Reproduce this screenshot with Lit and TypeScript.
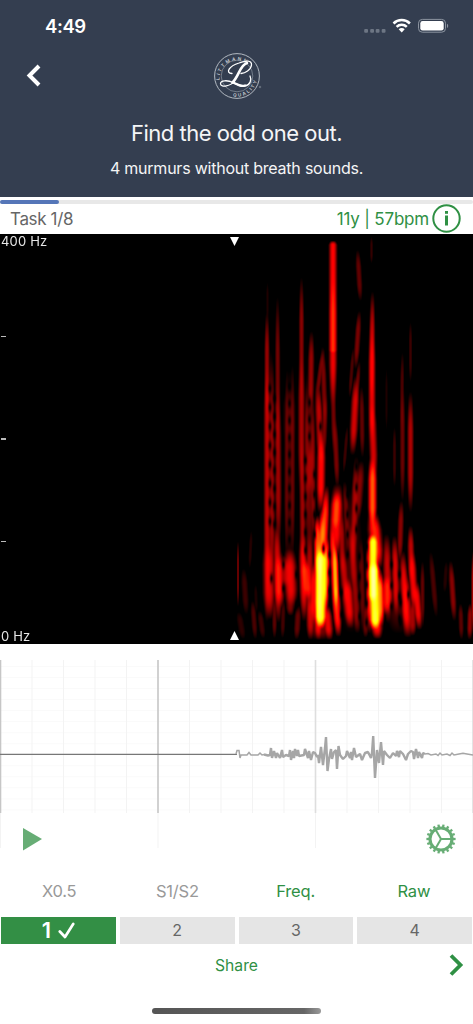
import { LitElement, html, css, svg } from "lit";
import { customElement, property } from "lit/decorators.js";
import { classMap } from "lit/directives/class-map.js";
import { styleMap } from "lit/directives/style-map.js";

// [x at top, x at bottom, top, bottom, half width, level, end sharpness]
type Streak = [number, number, number, number, number, number, number?];

const STREAKS: Streak[] = [
  // loud vertical bar
  [332.5, 332.5, 6, 120, 3, 0.36, 25],
  [332.5, 332.5, 30, 178, 3, 0.34],
  [332, 334, 130, 225, 2, 0.17],
  [334, 337, 180, 255, 2.2, 0.18],
  // early ladder
  [267, 267, 45, 90, 1.2, 0.06],
  [266.5, 266.5, 75, 200, 2, 0.22],
  [266.5, 266.5, 120, 390, 2.4, 0.25, 5],
  [271.5, 272, 120, 370, 2.2, 0.2],
  [269, 269, 110, 385, 4, 0.2],
  [277, 277.5, 58, 240, 2, 0.17],
  [277, 278, 140, 320, 2.6, 0.23],
  [276, 278, 285, 390, 3, 0.29],
  [286.5, 286, 130, 330, 1.8, 0.14],
  [292, 292, 125, 330, 2, 0.15],
  [289, 289, 130, 340, 4, 0.13],
  [289, 289, 150, 215, 4.5, 0.13],
  [301, 301, 40, 180, 2, 0.2],
  [301, 301, 110, 270, 2.6, 0.24],
  [301.5, 303, 190, 390, 2.4, 0.23],
  [306, 307, 145, 300, 2, 0.17],
  [311, 310, 95, 185, 2.4, 0.22],
  [312, 313, 160, 320, 2, 0.19],
  [309, 309, 130, 340, 4.5, 0.17],
  [310, 309, 205, 265, 3.5, 0.22],
  [323, 316, 113, 165, 2, 0.17],
  [322, 325, 110, 200, 2.2, 0.18],
  [317, 321, 145, 240, 2.8, 0.27],
  [325, 323, 155, 225, 2.2, 0.18],
  [321, 320, 195, 280, 3.2, 0.37],
  // right of the bar
  [371, 371, 1, 30, 1.2, 0.09],
  [357, 360, 14, 68, 2.2, 0.15],
  [359, 355, 75, 136, 2.2, 0.18],
  [353, 349, 112, 165, 1.6, 0.12],
  [359, 354, 125, 185, 1.8, 0.16],
  [356, 352, 140, 222, 3, 0.3],
  [361, 362, 150, 225, 2, 0.15],
  [347, 343, 190, 240, 1.5, 0.1],
  [372, 371, 55, 180, 2.2, 0.27],
  [371.5, 371.5, 82, 220, 2.7, 0.32],
  [371, 374, 160, 250, 3, 0.3],
  [372, 372, 218, 300, 3.2, 0.5],
  [386, 386, 130, 200, 1.2, 0.06],
  [394, 394, 190, 255, 1.5, 0.1],
  [402, 401, 115, 205, 1.6, 0.12],
  [402, 402, 145, 270, 2, 0.16],
  [410, 410, 85, 150, 1.4, 0.1],
  [410, 410, 155, 280, 2.4, 0.25],
  // main beat
  [326, 322, 250, 340, 3, 0.44],
  [323, 318, 270, 360, 3.2, 0.52],
  [317, 317, 280, 345, 2.7, 0.48],
  [326, 324, 300, 380, 3, 0.6],
  [318, 318, 300, 400, 3.4, 0.64],
  [321, 320, 312, 396, 4.6, 0.82, 6],
  [313, 313, 325, 395, 2.8, 0.36],
  [337, 335, 248, 325, 4.6, 0.36],
  [337, 334, 255, 300, 4, 0.4],
  [331, 336, 280, 395, 2.6, 0.42],
  [334, 336, 305, 378, 2.4, 0.58],
  [335, 338, 345, 403, 3, 0.4],
  [341, 342, 275, 350, 2.4, 0.23],
  // valley between the beats
  [356, 352, 220, 345, 2.8, 0.25],
  [361, 356, 225, 290, 3.2, 0.2],
  [350, 355, 285, 365, 3, 0.25],
  [346, 350, 340, 395, 4, 0.35],
  [342, 346, 310, 380, 3, 0.27],
  [344, 348, 245, 320, 2.3, 0.17],
  [354, 357, 340, 400, 3, 0.21],
  [360, 363, 300, 402, 2.4, 0.15],
  [350, 350, 250, 404, 8, 0.12],
  // second beat
  [372, 378, 275, 335, 4.8, 0.42],
  [372.5, 372.5, 298, 370, 4, 0.78, 7],
  [373, 375, 325, 397, 4.6, 0.82, 6],
  [379, 380, 335, 394, 3.2, 0.56],
  [368, 369, 305, 400, 2.4, 0.38],
  [375, 377, 370, 405, 4.2, 0.38],
  [366, 365, 365, 404, 2.4, 0.18],
  // trailing activity
  [386, 388, 298, 390, 3.2, 0.28],
  [387, 386, 338, 382, 4.6, 0.38],
  [394, 396, 300, 385, 2.8, 0.31],
  [401, 399, 265, 330, 2.3, 0.2],
  [402, 406, 315, 404, 3, 0.33],
  [410, 411, 290, 355, 2.5, 0.27],
  [411, 414, 312, 380, 3, 0.34],
  [415, 419, 345, 396, 3, 0.34],
  [405, 408, 338, 404, 3.4, 0.32],
  [412, 412, 365, 402, 3, 0.24],
  [398, 398, 320, 402, 9, 0.12],
  [422, 422, 325, 395, 1.8, 0.15],
  [430, 436, 315, 385, 2.3, 0.12],
  [446, 444, 325, 360, 1.8, 0.07],
  [450, 454, 325, 388, 2.4, 0.2],
  [460, 461, 368, 406, 2, 0.14],
  [470, 469, 368, 406, 2.2, 0.21],
  [473, 473, 315, 402, 1.8, 0.27],
  // low frequencies before the beats
  [237.5, 237.5, 305, 374, 0.9, 0.18],
  [243, 246, 332, 382, 2.6, 0.1],
  [251, 249, 294, 336, 1.5, 0.07],
  [255, 256, 348, 380, 1.6, 0.06],
  [238, 243, 376, 406, 2.8, 0.08],
  [252, 255, 365, 406, 2.2, 0.12],
  [259, 263, 375, 405, 2.4, 0.1],
  [268, 269, 302, 386, 4.4, 0.32],
  [278, 279, 315, 376, 4, 0.37],
  [289, 291, 312, 376, 4.8, 0.34],
  [284, 286, 320, 356, 4.2, 0.26],
  [302, 304, 294, 388, 3.2, 0.32],
  [304, 308, 322, 368, 4.6, 0.4],
  [309, 309, 290, 404, 3, 0.25],
  [274, 274, 360, 405, 1.9, 0.14],
  [289, 290, 355, 382, 3, 0.18],
  [283, 282, 364, 405, 1.9, 0.11],
  [298, 296, 370, 406, 2.5, 0.15],
  [310, 310, 360, 406, 3, 0.27],
  [317, 318, 370, 406, 3, 0.32],
  [326, 329, 370, 406, 3.4, 0.33],
  [320, 320, 375, 406, 9, 0.18],
];

// dark pockets inside the streaks: [x, first y, last y, step]
const POCKETS: [number, number, number, number][] = [
  [269.5, 154, 300, 19],
  [274, 164, 305, 18],
  [289, 152, 310, 17],
  [283, 330, 375, 24],
  [296, 340, 372, 30],
  [309, 168, 215, 17],
  [305, 226, 320, 18],
  [314, 240, 300, 20],
  [320, 192, 192, 20],
  [271, 344, 344, 20],
  [323, 314, 314, 20],
  [329, 320, 365, 18],
  [347, 260, 335, 20],
  [356, 232, 305, 21],
  [391, 330, 392, 21],
  [399, 340, 385, 22],
  [408, 360, 360, 20],
  [366, 312, 390, 19],
  [359, 322, 390, 20],
  [341, 358, 385, 22],
  [400, 368, 390, 20],
];

const WAVE: [number, number][] = [
  [264, 754.5], [268, 755.5], [270, 755], [271, 748], [272, 758], [274, 751],
  [276, 758], [277, 753], [280, 758], [282, 750], [283, 757], [286, 755], [289, 756], [290, 750],
  [291, 760], [293, 751], [294, 758], [295, 749], [297, 756], [298, 750], [299, 756], [304, 755],
  [305, 749], [308, 758], [309, 751], [311, 760], [313, 752], [315, 753], [317, 757], [318, 755],
  [319, 763], [321, 747], [323, 765], [325, 748], [326, 737], [327.5, 771], [329, 759], [331, 749],
  [332, 759], [334, 752], [336, 750], [337, 769], [338.5, 746], [340, 755], [343, 759], [346, 756],
  [347, 751], [350, 758], [351, 752], [352, 760], [354, 748], [356, 757], [360, 754], [362, 760],
  [365, 753], [368, 752], [371, 758], [372, 753], [373.2, 736], [375, 778], [377, 750], [379, 763],
  [381, 742], [383, 765], [384, 751], [387, 755], [390, 758], [393, 753], [396, 756], [397, 751],
  [399, 757], [400, 751], [403, 754], [406, 760], [408, 754], [411, 751], [413, 752], [414, 759],
  [416, 749], [418, 758], [419, 752], [422, 758], [423, 753], [425, 754],
];

const LEAD: [number, number][] = [
  [236, 754], [237, 750.5], [239, 750.5], [240, 758], [241, 755], [247, 755], [249, 752.5], [251, 755],
  [258, 755], [260, 753], [262, 755], [264, 754.5],
];

const TAIL: [number, number][] = [
  [425, 754], [428, 753.5], [431, 755], [436, 754], [438, 755.5], [440, 753], [442, 755], [447, 754],
  [450, 755.5], [452, 753], [454, 755], [459, 754], [463, 753.3], [467, 754], [473, 755],
];

const toPoints = (list: [number, number][]) => list.map((p) => p.join(",")).join(" ");

@customElement("heart-spectrogram")
export class HeartSpectrogram extends LitElement {
  static styles = css`
    :host {
      display: block;
      position: relative;
      height: 410px;
      background: #000;
      color: #e8e8e8;
      font-size: 13px;
      line-height: 16px;
    }
    canvas {
      display: block;
      width: 473px;
      height: 410px;
    }
    .scale {
      position: absolute;
      inset: -1px 0 0;
      display: flex;
      flex-direction: column;
      justify-content: space-between;
      padding-left: 1px;
      letter-spacing: 0.2px;
    }
    .ticks {
      display: flex;
      flex-direction: column;
      gap: 101px;
      padding-top: 2px;
    }
    .tick {
      width: 5px;
      height: 1.5px;
      background: #bbb;
    }
    .marker {
      position: absolute;
      left: 230px;
      width: 9px;
      height: 9px;
      fill: #fff;
    }
    .marker.top {
      top: 3px;
    }
    .marker.bottom {
      bottom: 4px;
    }
  `;

  firstUpdated() {
    const canvas = this.renderRoot.querySelector("canvas") as HTMLCanvasElement;
    const ctx = canvas.getContext("2d");
    if (!ctx) return;
    const { width, height } = canvas;
    const image = ctx.createImageData(width, height);
    for (let y = 0; y < height; y++) {
      for (let x = 236; x < width; x++) {
        const [r, g, b] = this.heat(this.level(x, y));
        const i = (y * width + x) * 4;
        image.data[i] = r;
        image.data[i + 1] = g;
        image.data[i + 2] = b;
        image.data[i + 3] = 255;
      }
    }
    ctx.putImageData(image, 0, 0);
  }

  level(x: number, y: number) {
    let sum = 0;
    for (const [x0, x1, top, bottom, w, v, sharpness = 3] of STREAKS) {
      if (y < top || y > bottom) continue;
      const t = (y - top) / (bottom - top);
      const edge = Math.min(1, Math.min(t, 1 - t) * sharpness);
      // streaks get thinner towards their ends
      const dx = (x - (x0 + (x1 - x0) * t)) / (w * (0.7 + 0.3 * edge));
      if (Math.abs(dx) > 2.6) continue;
      const value = v * Math.exp(-(dx ** 4) * 0.16 - dx * dx * 0.45) * Math.sin((edge * Math.PI) / 2);
      sum += value ** 3;
    }
    let level = Math.cbrt(sum);
    for (const [px, first, last, step] of POCKETS) {
      for (let py = first; py <= last; py += step) {
        const d = ((x - px) / 1.7) ** 2 + ((y - py) / 5) ** 2;
        if (d < 6) level *= 1 - 0.8 * Math.exp(-d);
      }
    }
    return level;
  }

  // black - red - yellow - white
  heat(level: number) {
    return [(level - 0.02) / 0.34, (level - 0.37) / 0.38, (level - 0.76) / 0.4].map(
      (c) => Math.max(0, Math.min(1, c)) * 255
    );
  }

  render() {
    return html`
      <canvas width="473" height="410"></canvas>
      <div class="scale">
        <span>400 Hz</span>
        <div class="ticks">
          <div class="tick"></div>
          <div class="tick"></div>
          <div class="tick"></div>
        </div>
        <span>0 Hz</span>
      </div>
      <svg class="marker top" viewBox="0 0 9 9"><path d="M0 0h9L4.5 9z" /></svg>
      <svg class="marker bottom" viewBox="0 0 9 9"><path d="M0 9h9L4.5 0z" /></svg>
    `;
  }
}

@customElement("phono-chart")
export class PhonoChart extends LitElement {
  static styles = css`
    :host {
      display: block;
      height: 188px;
    }
    svg {
      display: block;
    }
    .minor {
      stroke: #f3f3f3;
    }
    .row {
      stroke: #fafafa;
    }
    .major {
      stroke: #c6c6c6;
      stroke-width: 1.6;
    }
    .major.late {
      stroke: #dedede;
    }
    .tail {
      stroke: #f3f3f3;
    }
    .base {
      stroke: #777;
      stroke-width: 1.2;
    }
    .wave {
      fill: none;
      stroke: #a6a6a6;
      stroke-width: 2.4;
      stroke-linejoin: bevel;
    }
    .quiet {
      fill: none;
      stroke: #a6a6a6;
      stroke-width: 1.5;
    }
  `;

  render() {
    const columns = Array.from({ length: 16 }, (_, i) => i);
    const rows = Array.from({ length: 14 }, (_, i) => 666.5 + i * 11.03);
    return html`
      <svg width="473" height="188" viewBox="0 660 473 188">
        ${rows.map((y) => svg`<path class="row" d="M0 ${y}H473" />`)}
        ${columns.map((i) => {
          const x = 0.5 + i * 31.5;
          if (i % 5) return svg`<path class="minor" d="M${x} 660V813" />`;
          return svg`
            <path class="tail" d="M${x} 813V848" />
            <path class=${i > 5 ? "major late" : "major"} d="M${x} 660V813" />
          `;
        })}
        <path class="base" d="M0 754.3H237" />
        <polyline class="quiet" points=${toPoints(LEAD)} />
        <polyline class="wave" points=${toPoints(WAVE)} />
        <polyline class="quiet" points=${toPoints(TAIL)} />
      </svg>
    `;
  }
}

@customElement("answer-button")
export class AnswerButton extends LitElement {
  @property() label = "";
  @property({ type: Boolean }) selected = false;

  static styles = css`
    :host {
      display: block;
      flex: 1;
    }
    button {
      display: flex;
      align-items: center;
      justify-content: center;
      gap: 7px;
      width: 100%;
      height: 27px;
      padding: 0;
      border: none;
      background: #e5e5e5;
      color: #666;
      font: 400 16px/27px Inter, Roboto, sans-serif;
    }
    .selected {
      background: #338f45;
      color: #fff;
      font-size: 22px;
      font-weight: 600;
    }
  `;

  render() {
    return html`
      <button class=${classMap({ selected: this.selected })}>
        ${this.label}
        ${this.selected
          ? html`
              <svg width="17" height="17" viewBox="0 0 17 17" fill="none" stroke="#fff" stroke-width="2.7">
                <path d="M1.8 9.5L7 15L15.2 2" stroke-linecap="round" stroke-linejoin="round" />
              </svg>
            `
          : ""}
      </button>
    `;
  }
}

@customElement("app-root")
export class AppRoot extends LitElement {
  @property({ type: Number }) task = 1;
  @property({ type: Number }) total = 8;

  static styles = css`
    :host {
      display: flex;
      flex-direction: column;
      position: relative;
      width: 473px;
      height: 1024px;
      overflow: hidden;
      background: #fff;
      font-family: Inter, Roboto, sans-serif;
    }
    header {
      display: flex;
      flex-direction: column;
      height: 197px;
      background: #343e50;
      color: #f4f5f6;
    }
    .status {
      display: flex;
      align-items: center;
      justify-content: space-between;
      height: 52px;
      padding: 0 24px 0 45px;
      color: #fff;
    }
    .time {
      font-size: 18.5px;
      font-weight: 600;
      letter-spacing: -0.4px;
    }
    .nav {
      display: grid;
      grid-template-columns: 60px 1fr 60px;
      height: 48px;
    }
    .back {
      margin: 12px 0 0 26px;
    }
    .logo {
      margin-left: 153px;
      overflow: visible;
    }
    .ring {
      font: 600 4.6px Inter, sans-serif;
      fill: #cbd0d6;
    }
    h1,
    p {
      margin: 0;
      text-align: center;
      font-weight: 400;
    }
    h1 {
      padding-top: 18px;
      font-size: 22px;
      line-height: 30px;
      letter-spacing: -0.5px;
    }
    p {
      padding-top: 8px;
      font-size: 16px;
      line-height: 24px;
      letter-spacing: -0.23px;
    }
    .progress {
      height: 4px;
      margin-top: 3px;
      border-radius: 2px;
      background: #e8e8e8;
    }
    .progress div {
      height: 100%;
      border-radius: 2px;
      background: #5576b8;
    }
    .info {
      display: flex;
      align-items: center;
      justify-content: space-between;
      height: 29.5px;
      padding: 0 12px 0 10px;
      color: #666;
      font-size: 17px;
      letter-spacing: -0.35px;
    }
    .patient {
      display: flex;
      align-items: center;
      gap: 3px;
      color: #2f9044;
      letter-spacing: -0.2px;
    }
    phono-chart {
      margin-top: 16.5px;
    }
    .controls {
      position: absolute;
      top: 824px;
      left: 21.5px;
      right: 16px;
      display: flex;
      justify-content: space-between;
    }
    .filters {
      display: flex;
      height: 69px;
      color: #999;
      font-size: 16.5px;
      line-height: 86px;
      text-align: center;
      letter-spacing: -0.2px;
    }
    .filters span {
      flex: 1;
    }
    .filters .on {
      color: #2f9044;
    }
    .answers {
      display: flex;
      gap: 4px;
      padding: 0 1px;
    }
    .footer {
      display: grid;
      grid-template-columns: 1fr auto 1fr;
      align-items: center;
      height: 42px;
      padding: 0 9px;
      color: #2f9044;
      font-size: 15.7px;
    }
    .footer svg {
      grid-column: 3;
      justify-self: end;
    }
    .footer span {
      grid-column: 2;
    }
    .home {
      width: 169px;
      height: 6px;
      margin: 22px auto 0;
      border-radius: 3px;
      background: linear-gradient(90deg, #555, #666 90%, #999);
    }
  `;

  renderGear() {
    const teeth = Array.from({ length: 18 }, (_, i) => i * 20);
    return html`
      <svg width="32" height="30" viewBox="-16 -15 32 30" fill="none" stroke="#67ad75">
        <circle r="11" stroke-width="3.1" />
        ${teeth.map((a) => svg`<path d="M12 0H14.6" stroke-width="2.3" transform="rotate(${a})" />`)}
        ${[0, 120, 240].map((a) => svg`<path d="M0 0H11" stroke-width="2" transform="rotate(${a})" />`)}
      </svg>
    `;
  }

  renderLogo() {
    return html`
      <svg class="logo" width="48" height="48" viewBox="-24 -24 48 48" fill="none">
        <defs>
          <path id="upper" d="M-17.3 4A17.7 17.7 0 1 1 18 3" />
          <path id="lower" d="M-4 20.4A20.8 20.8 0 0 0 19.7 -6" />
        </defs>
        <circle r="22.4" stroke="#c0c6cd" stroke-width="0.9" />
        <circle r="15.8" stroke="#8d96a2" stroke-width="0.7" />
        <text class="ring" letter-spacing="2"><textPath href="#upper">LITTMANN</textPath></text>
        <text class="ring" letter-spacing="1.8"><textPath href="#lower">QUALITY</textPath></text>
        <g stroke="#fff" stroke-linecap="round" stroke-linejoin="round">
          <path
            stroke-width="1.3"
            d="M-5 -2.5C-12 -3 -8 -10 2 -13C9 -15.5 15 -16 14.5 -11C14 -6 8 -3 4 -2.5M-2.5 5C-6 10 -16 12 -16.5 8C-17 4 -9 4 -4 6.5C1 9 4 11 8 10C13 9 15 4 13 0"
          />
          <path stroke-width="2.6" d="M10 -13C3 -11 2 0 -4.5 6.5" />
          <path stroke-width="2.2" d="M-4 6.5C1 9 4 11 8 9.5" />
        </g>
        <circle cx="23" cy="11" r="0.8" stroke="#9aa2ad" stroke-width="0.5" />
      </svg>
    `;
  }

  render() {
    return html`
      <header>
        <div class="status">
          <span class="time">4:49</span>
          <svg width="85" height="16" viewBox="0 0 85 16" fill="#fff">
            ${[0, 6, 11.5, 17.5].map(
              (x) => svg`<rect x=${x + 0.2} y="11" width="3.8" height="3.8" rx="1" fill="#6d7684" />`
            )}
            <g fill="none" stroke="#fff" stroke-width="2.5">
              <path d="M29.5 5.5A11.6 11.6 0 0 1 45.9 5.5" />
              <path d="M32.6 8.9A7.2 7.2 0 0 1 42.8 8.9" />
            </g>
            <path d="M34.7 11.3A4.2 4.2 0 0 1 40.7 11.3L37.7 14.4z" />
            <rect x="54.5" y="1.4" width="27" height="12.8" rx="3.8" fill="none" stroke="#8c94a0" />
            <rect x="56.3" y="3.1" width="23.4" height="9.4" rx="2.3" />
            <path d="M83 5.7C84.6 6.4 84.6 9.3 83 10z" fill="#8c94a0" />
          </svg>
        </div>
        <div class="nav">
          <svg class="back" width="16" height="24" viewBox="0 0 16 24" fill="none" stroke="#fff" stroke-width="4">
            <path d="M13 2L3.5 11.5L13 21" />
          </svg>
          ${this.renderLogo()}
        </div>
        <h1>Find the odd one out.</h1>
        <p>4 murmurs without breath sounds.</p>
      </header>
      <div class="progress">
        <div style=${styleMap({ width: `${(this.task / this.total) * 100}%` })}></div>
      </div>
      <div class="info">
        <span>Task ${this.task}/${this.total}</span>
        <div class="patient">
          <span>11y | 57bpm</span>
          <svg width="29" height="29" viewBox="0 0 29 29" fill="none" stroke="#2f9044">
            <circle cx="14.5" cy="14.5" r="13.2" stroke-width="2" />
            <path d="M14.5 11.5V21.5" stroke-width="3" />
            <path d="M14.5 7V9.8" stroke-width="3" />
          </svg>
        </div>
      </div>
      <heart-spectrogram></heart-spectrogram>
      <phono-chart></phono-chart>
      <div class="filters">
        <span>X0.5</span>
        <span>S1/S2</span>
        <span class="on">Freq.</span>
        <span class="on">Raw</span>
      </div>
      <div class="answers">
        ${[1, 2, 3, 4].map(
          (n) => html`<answer-button label=${n} ?selected=${n === 1}></answer-button>`
        )}
      </div>
      <div class="footer">
        <span>Share</span>
        <svg width="16" height="22" viewBox="0 0 16 22" fill="none" stroke="#2f9044" stroke-width="3.8">
          <path d="M3 1.5L12.5 11L3 20.5" />
        </svg>
      </div>
      <div class="home"></div>
      <div class="controls">
        <svg width="20" height="30" viewBox="0 0 20 30"><path d="M1 4L20 15L1 26.5z" fill="#67ad75" /></svg>
        ${this.renderGear()}
      </div>
    `;
  }
}
